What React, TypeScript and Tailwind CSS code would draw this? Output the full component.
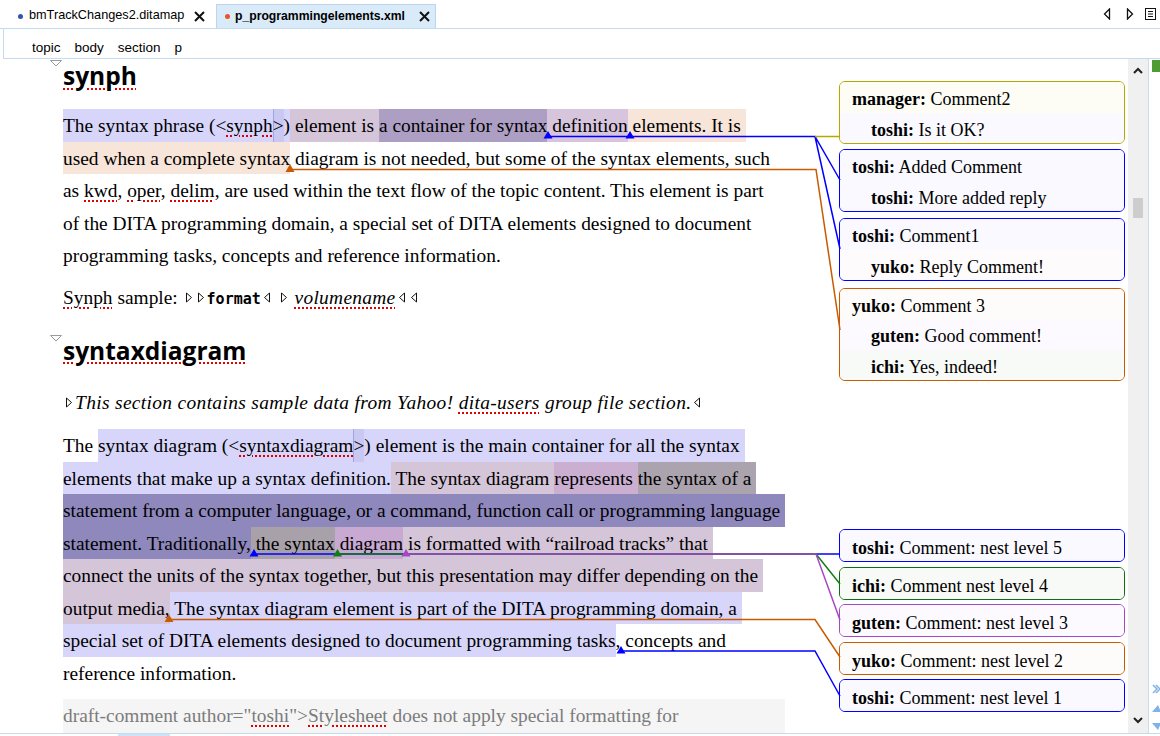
import React from "react";

type Seg = { t: React.ReactNode; bg?: string };

const LAV = "bg-[#d7d6fa]";
const LAVD = "bg-[#c9c8f2] shadow-[inset_1px_0_0_#a4a4e2]";
const MAUVE = "bg-[#d5c5d9]";
const MAUVE2 = "bg-[#d6c5dd]";
const DMAUVE = "bg-[#ad9fc4]";
const PEACH = "bg-[#f7e5d9]";
const PINK = "bg-[#cbafd1]";
const GREY = "bg-[#aba3ad]";
const DARK = "bg-[#8f88bd]";
const GREY2 = "bg-[#a9a1a9]";
const PINK2 = "bg-[#c8a9d2]";

function Sp({ children }: { children: React.ReactNode }) {
  return (
    <span className="underline decoration-[#e00000] decoration-dotted decoration-2 underline-offset-[3px]">
      {children}
    </span>
  );
}

function TagR() {
  return (
    <svg width="8" height="11" viewBox="0 0 8 11" className="mx-[2px] inline-block align-[1px]">
      <path d="M1.5 1L6.5 5.5L1.5 10Z" fill="white" stroke="#111" strokeWidth="1" />
    </svg>
  );
}

function TagL() {
  return (
    <svg width="8" height="11" viewBox="0 0 8 11" className="mx-[2px] inline-block align-[1px]">
      <path d="M6.5 1L1.5 5.5L6.5 10Z" fill="white" stroke="#111" strokeWidth="1" />
    </svg>
  );
}

function Caret() {
  return (
    <svg width="12" height="7" viewBox="0 0 12 7" className="absolute left-[-13px] top-0">
      <path d="M0.5 0.5H11.5L6 6Z" fill="white" stroke="#9a9a9a" strokeWidth="1" />
    </svg>
  );
}

function Row({ segs }: { segs: Seg[] }) {
  return (
    <div className="flex h-[32.5px] whitespace-pre leading-[34.5px]">
      {segs.map((s, i) => (
        <span key={i} className={s.bg}>
          {s.t}
        </span>
      ))}
    </div>
  );
}

const para1: Seg[][] = [
  [
    { t: <>The syntax phrase (&lt;<Sp>synph</Sp></>, bg: LAV },
    { t: ">", bg: LAVD },
    { t: ")", bg: LAV },
    { t: " element is ", bg: MAUVE },
    { t: "a container for syntax", bg: DMAUVE },
    { t: " definition", bg: MAUVE2 },
    { t: " elements. It is ", bg: PEACH },
  ],
  [
    { t: "used when a complete syntax", bg: PEACH },
    { t: " diagram is not needed, but some of the syntax elements, such" },
  ],
  [
    {
      t: (
        <>
          as <Sp>kwd</Sp>, <Sp>oper</Sp>, <Sp>delim</Sp>, are used within the text flow of the topic content. This element is part
        </>
      ),
    },
  ],
  [{ t: "of the DITA programming domain, a special set of DITA elements designed to document" }],
  [{ t: "programming tasks, concepts and reference information." }],
];

const para2: Seg[][] = [
  [
    { t: "The " },
    { t: <>syntax diagram (&lt;<Sp>syntaxdiagram</Sp></>, bg: LAV },
    { t: ">", bg: LAVD },
    { t: ") element is the main container for all the syntax ", bg: LAV },
  ],
  [
    { t: "elements that make up a syntax definition.", bg: LAV },
    { t: " The syntax diagram ", bg: MAUVE },
    { t: "represents ", bg: PINK },
    { t: "the syntax of a ", bg: GREY },
  ],
  [{ t: "statement from a computer language, or a command, function call or programming language ", bg: DARK }],
  [
    { t: "statement. Traditionally,", bg: DARK },
    { t: " the syntax", bg: GREY2 },
    { t: " diagram", bg: PINK2 },
    { t: " is formatted with \u201crailroad tracks\u201d that ", bg: MAUVE },
  ],
  [{ t: "connect the units of the syntax together, but this presentation may differ depending on the ", bg: MAUVE }],
  [
    { t: "output media,", bg: MAUVE },
    { t: " The syntax diagram element is part of the DITA programming domain, a ", bg: LAV },
  ],
  [
    { t: "special set of DITA elements designed to document programming tasks", bg: LAV },
    { t: ", concepts and" },
  ],
  [{ t: "reference information." }],
];

function TextColumn() {
  return (
    <div className="w-[806px] shrink-0 pl-[30px] font-['Liberation_Serif','Times_New_Roman',serif] text-[19.4px] text-black">
      <div className="relative mt-[1px] h-[32px] font-['Open_Sans',sans-serif] text-[24.5px] font-bold leading-[32px]">
        <Caret />
        <Sp>synph</Sp>
      </div>
      <div className="mt-[17px]">
        {para1.map((r, i) => (
          <Row key={i} segs={r} />
        ))}
      </div>
      <div className="mt-[9.5px] h-[32.5px] whitespace-pre leading-[34.5px]">
        <Sp>Synph</Sp> sample: <TagR />
        <TagR />
        <b className="font-['DejaVu_Sans_Mono',monospace] text-[15px]">format</b>
        <TagL /> <TagR /> <i className="tracking-[0.3px]"><Sp>volumename</Sp></i>
        <TagL />
        <TagL />
      </div>
      <div className="relative mt-[21px] h-[32px] font-['Open_Sans',sans-serif] text-[24.5px] font-bold leading-[32px]">
        <Caret />
        <Sp>syntaxdiagram</Sp>
      </div>
      <div className="mt-[19.5px] h-[32.5px] whitespace-pre leading-[34.5px]">
        <TagR />
        <i className="tracking-[0.35px]">
          This section contains sample data from Yahoo! <Sp>dita-users</Sp> group file section.
        </i>
        <TagL />
      </div>
      <div className="mt-[10.5px]">
        {para2.map((r, i) => (
          <Row key={i} segs={r} />
        ))}
      </div>
      <div className="mt-[10px] h-[40px] w-[722px] whitespace-pre bg-[#f5f5f5] leading-[34.5px] text-[#7c7c7c]">
        draft-comment author="<Sp>toshi</Sp>"&gt;<Sp>Stylesheet</Sp> does not apply special formatting for
      </div>
    </div>
  );
}

type CRow = { who: string; text: string; reply?: boolean; bg: string };
type CBox = { box: string; rows: CRow[] };

const topBoxes: CBox[] = [
  {
    box: "mt-[22px] h-[63px] border-[#b3a800]",
    rows: [
      { who: "manager:", text: " Comment2", bg: "bg-[#fdfdf6]" },
      { who: "toshi:", text: " Is it OK?", reply: true, bg: "bg-[#f9f9ff]" },
    ],
  },
  {
    box: "mt-[5px] h-[63px] border-[#0000ff]",
    rows: [
      { who: "toshi:", text: " Added Comment", bg: "bg-[#f9f9ff]" },
      { who: "toshi:", text: " More added reply", reply: true, bg: "bg-[#f9f9ff]" },
    ],
  },
  {
    box: "mt-[6px] h-[63px] border-[#0000ff]",
    rows: [
      { who: "toshi:", text: " Comment1", bg: "bg-[#f9f9ff]" },
      { who: "yuko:", text: " Reply Comment!", reply: true, bg: "bg-[#fdfbfb]" },
    ],
  },
  {
    box: "mt-[7px] h-[93px] border-[#c85a00]",
    rows: [
      { who: "yuko:", text: " Comment 3", bg: "bg-[#fefcfb]" },
      { who: "guten:", text: " Good comment!", reply: true, bg: "bg-[#fcfaff]" },
      { who: "ichi:", text: " Yes, indeed!", reply: true, bg: "bg-[#f7faf7]" },
    ],
  },
];

const bottomBoxes: CBox[] = [
  { box: "mt-[148px] h-[33px] border-[#0000ff]", rows: [{ who: "toshi:", text: " Comment: nest level 5", bg: "bg-[#f9f9ff]" }] },
  { box: "mt-[5px] h-[33px] border-[#0f6e0f]", rows: [{ who: "ichi:", text: " Comment nest level 4", bg: "bg-[#f7faf7]" }] },
  { box: "mt-[4px] h-[33px] border-[#a648c6]", rows: [{ who: "guten:", text: " Comment: nest level 3", bg: "bg-[#fcfaff]" }] },
  { box: "mt-[5px] h-[33px] border-[#c85a00]", rows: [{ who: "yuko:", text: " Comment: nest level 2", bg: "bg-[#fefcfb]" }] },
  { box: "mt-[4px] h-[33px] border-[#0000ff]", rows: [{ who: "toshi:", text: " Comment: nest level 1", bg: "bg-[#f9f9ff]" }] },
];

function Box({ b }: { b: CBox }) {
  return (
    <div className={"flex flex-col overflow-hidden rounded-[6px] border-[1.5px] " + b.box}>
      {b.rows.map((r, i) => (
        <div
          key={i}
          className={
            "flex flex-1 items-center whitespace-pre pt-[4px] " + r.bg + (r.reply ? " pl-[31px]" : " pl-[12px]")
          }
        >
          <b>{r.who}</b>
          {r.text}
        </div>
      ))}
    </div>
  );
}

function Comments() {
  return (
    <div className="flex w-[286px] shrink-0 flex-col font-['Liberation_Serif','Times_New_Roman',serif] text-[18px] leading-[22px] text-black">
      {topBoxes.map((b, i) => (
        <Box key={i} b={b} />
      ))}
      {bottomBoxes.map((b, i) => (
        <Box key={i} b={b} />
      ))}
    </div>
  );
}

function Scrollbar() {
  return (
    <div className="flex w-[20px] shrink-0 flex-col items-center bg-[#f0f0f0]">
      <svg width="10" height="7" viewBox="0 0 10 7" className="mt-[8px]">
        <path d="M1 6L5 2L9 6" fill="none" stroke="#222" strokeWidth="2" />
      </svg>
      <div className="mt-[124px] h-[20px] w-[10px] bg-[#cdcdcd]" />
      <div className="flex-1" />
      <svg width="10" height="7" viewBox="0 0 10 7" className="mb-[9px]">
        <path d="M1 1L5 5L9 1" fill="none" stroke="#222" strokeWidth="2" />
      </svg>
    </div>
  );
}

function RightGutter() {
  return (
    <div className="flex w-[11px] shrink-0 flex-col border-l border-[#c8dcef]">
      <div className="ml-[3px] mt-[1px] h-[12px] w-[8px] bg-[#4f9b34]" />
      <div className="flex-1" />
      <svg width="10" height="48" viewBox="0 0 10 48" className="mb-[2px] ml-[2px]">
        <path d="M2 2L6 6L2 10M5 2L9 6L5 10" fill="none" stroke="#7fb2e6" strokeWidth="1.5" />
        <path d="M1 29L7 22L10 29Z" fill="#7fb2e6" />
        <path d="M1 40L10 40L7 47Z" fill="#7fb2e6" />
      </svg>
    </div>
  );
}

function CloseX() {
  return (
    <svg width="11" height="11" viewBox="0 0 11 11">
      <path d="M1 1L10 10M10 1L1 10" stroke="#111" strokeWidth="2" />
    </svg>
  );
}

function TabBar() {
  return (
    <div className="flex h-[29px] items-end border-b border-[#c4daee] font-['Liberation_Sans',Arial,sans-serif] text-[12.7px] text-black">
      <div className="flex h-[24px] w-[216px] items-center pl-[18px]">
        <span className="mr-[6px] h-[5px] w-[5px] rounded-full bg-[#3552b3]" />
        <span>bmTrackChanges2.ditamap</span>
        <span className="ml-[10px]">
          <CloseX />
        </span>
      </div>
      <div className="flex h-[24px] w-[220px] items-center border-x border-t border-[#bcd5ec] bg-[#d9eaf9] pl-[8px]">
        <span className="mr-[5px] h-[5px] w-[5px] rounded-full bg-[#e8542c]" />
        <span className="text-[12.2px] font-bold">p_programmingelements.xml</span>
        <span className="ml-[14px]">
          <CloseX />
        </span>
      </div>
      <div className="flex-1" />
      <div className="mb-[8px] flex items-center gap-[13px] pr-[4px]">
        <svg width="8" height="12" viewBox="0 0 8 12" className="mr-[2px]">
          <path d="M6.5 1L1.5 6L6.5 11Z" fill="white" stroke="#111" strokeWidth="1.3" />
        </svg>
        <svg width="8" height="12" viewBox="0 0 8 12" className="mr-[-2px]">
          <path d="M1.5 1L6.5 6L1.5 11Z" fill="white" stroke="#111" strokeWidth="1.3" />
        </svg>
        <svg width="11" height="12" viewBox="0 0 11 12">
          <rect x="0.5" y="0.5" width="10" height="11" fill="white" stroke="#111" />
          <path d="M3 3.5H8M3 6H8M3 8.5H8" stroke="#111" />
        </svg>
      </div>
    </div>
  );
}

function Breadcrumb() {
  return (
    <div className="ml-[3px] flex h-[30px] items-center gap-[14px] border-b border-l border-[#c4daee] pl-[28px] pt-[9px] font-['Liberation_Sans',Arial,sans-serif] text-[13.5px] text-black">
      <span>topic</span>
      <span>body</span>
      <span>section</span>
      <span>p</span>
    </div>
  );
}

function Connectors() {
  const w = 1.5;
  return (
    <svg className="pointer-events-none absolute left-0 top-0" width="1160" height="736" viewBox="0 0 1160 736">
      <path d="M548 136.5H815L840 180M815 136.5L840 249" fill="none" stroke="#0000ff" strokeWidth={w} />
      <path d="M815 136.5H840" fill="none" stroke="#b3a800" strokeWidth={w} />
      <path d="M290 169.5H816L840 330" fill="none" stroke="#c85a00" strokeWidth={w} />
      <path d="M548 131L543.5 138.5H552.5Z M630 131L625.5 138.5H634.5Z" fill="#0000ff" />
      <path d="M290 164L285.5 172H294.5Z" fill="#c85a00" />

      <path d="M254 554H840" fill="none" stroke="#0000ff" strokeWidth={w} />
      <path d="M337 554H816L840 584" fill="none" stroke="#0f800f" strokeWidth={w} />
      <path d="M406 554H816L840 620" fill="none" stroke="#a648c6" strokeWidth={w} />
      <path d="M254 549L249.5 556.5H258.5Z" fill="#0000ff" />
      <path d="M337.5 549L333 556.5H342Z" fill="#0f800f" />
      <path d="M406 549L401.5 556.5H410.5Z" fill="#a648c6" />

      <path d="M169 619.5H815L840 657" fill="none" stroke="#c85a00" strokeWidth={w} />
      <path d="M169 614.5L164.5 622H173.5Z" fill="#c85a00" />
      <path d="M621 651H815L840 696" fill="none" stroke="#0000ff" strokeWidth={w} />
      <path d="M621 646L616.5 653.5H625.5Z" fill="#0000ff" />
    </svg>
  );
}

export default function App() {
  return (
    <div className="relative h-[736px] w-[1160px] overflow-hidden bg-white">
      <TabBar />
      <Breadcrumb />
      <div className="flex h-[674px] overflow-hidden">
        <div className="w-[33px] shrink-0" />
        <TextColumn />
        <Comments />
        <div className="w-[3px] shrink-0" />
        <Scrollbar />
        <RightGutter />
      </div>
      <div className="relative h-[3px] border-t border-[#c4daee]">
        <div className="absolute left-[118px] top-0 h-[3px] w-[52px] bg-[#cfe3f6]" />
      </div>
      <Connectors />
    </div>
  );
}
